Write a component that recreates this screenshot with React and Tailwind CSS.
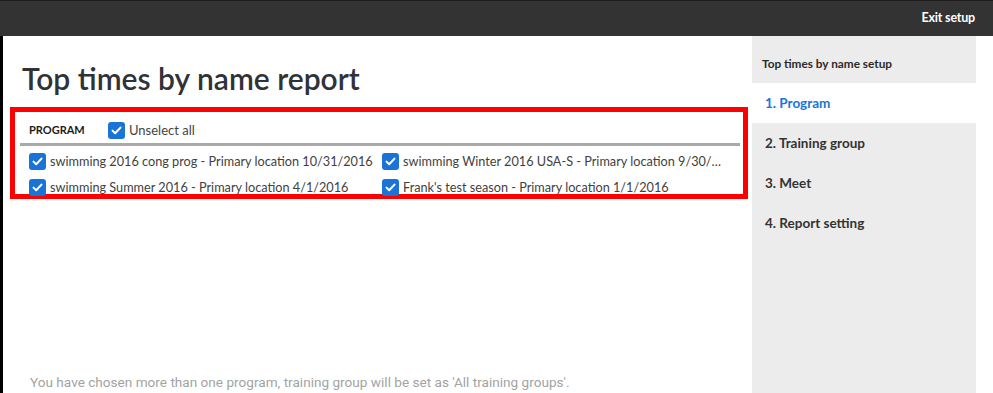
import React from "react";

const programs = [
  "swimming 2016 cong prog - Primary location 10/31/2016",
  "swimming Winter 2016 USA-S - Primary location 9/30/2016",
  "swimming Summer 2016 - Primary location 4/1/2016",
  "Frank's test season - Primary location 1/1/2016",
];

const steps = ["1. Program", "2. Training group", "3. Meet", "4. Report setting"];

function Check() {
  return (
    <span className="w-[17px] h-[17px] shrink-0 rounded-[3px] bg-[#1a74d8] flex items-center justify-center">
      <svg width="11" height="9" viewBox="0 0 11 9" fill="none">
        <path d="M1.5 4.6 L4.2 7.2 L9.5 1.6" stroke="white" strokeWidth="2" strokeLinecap="round" strokeLinejoin="round" />
      </svg>
    </span>
  );
}

export default function App() {
  return (
    <div className="w-[993px] h-[393px] overflow-hidden bg-white flex flex-col font-['Lato',sans-serif]">
      {/* Top bar */}
      <div className="h-[36px] shrink-0 bg-[#333333] border-t border-[#1e1e1e] flex items-center justify-end pr-[18px]">
        <span className="text-white text-[12.5px] font-bold tracking-[-0.2px]">Exit setup</span>
      </div>

      <div className="flex flex-1 min-h-0">
        {/* Main */}
        <div className="w-[752px] border-l-[3px] border-black flex flex-col">
          <h1 className="pl-[19px] pt-[24px] text-[30px] leading-[36px] text-[#2f3338] font-semibold">
            Top times by name report
          </h1>

          <div className="ml-[7px] mt-[11px] w-[738px] h-[92px] border-[5px] border-[#ff0000] pt-[10px]">
            <div className="flex items-center pl-[14px] h-[17px]">
              <span className="text-[11px] font-bold text-[#1b1b1b] w-[79px]">PROGRAM</span>
              <Check />
              <span className="ml-[4px] text-[13px] text-[#444]">Unselect all</span>
            </div>
            <div className="ml-[5px] mr-[3px] mt-[4px] h-[3px] bg-[#a9a9a9]" />
            <div className="grid grid-cols-[353px_343px] gap-y-[9px] pl-[14px] mt-[7px]">
              {programs.map((p) => (
                <div key={p} className="flex items-center h-[17px] min-w-0">
                  <Check />
                  <span className="ml-[4px] text-[12.7px] text-[#3f3f3f] truncate">{p}</span>
                </div>
              ))}
            </div>
          </div>

          <div className="flex-1" />
          <p className="pl-[27px] pb-[1px] text-[13.6px] text-[#a3a3a3] font-['Roboto',sans-serif]">
            You have chosen more than one program, training group will be set as 'All training groups'.
          </p>
        </div>

        {/* Sidebar */}
        <div className="w-[224px] bg-[#ececec] flex flex-col">
          <div className="h-[47px] flex items-end pl-[10px] pb-[10px]">
            <span className="text-[11.8px] font-bold text-[#2a2a2a]">Top times by name setup</span>
          </div>
          {steps.map((s, i) => (
            <div
              key={s}
              className={
                i === 0
                  ? "h-[40px] bg-white flex items-center pl-[13px] text-[13.5px] font-bold text-[#1a74d8]"
                  : "h-[40px] flex items-center pl-[13px] text-[13.5px] font-bold text-[#333]"
              }
            >
              {s}
            </div>
          ))}
        </div>
        <div className="flex-1 bg-white" />
      </div>
    </div>
  );
}
